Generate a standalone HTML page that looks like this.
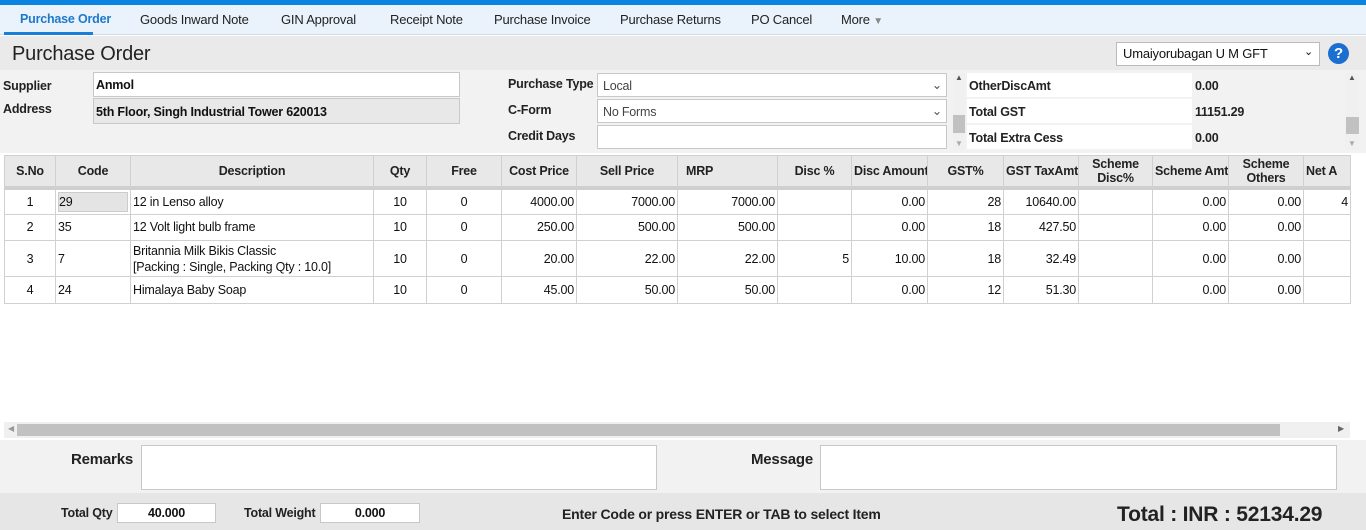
<!DOCTYPE html>
<html><head><meta charset="utf-8"><style>
*{box-sizing:border-box;margin:0;padding:0}
body{width:1366px;height:530px;overflow:hidden;background:#fff;font-family:"Liberation Sans",sans-serif;font-size:12.5px;color:#111;position:relative;letter-spacing:-0.2px}
.a{position:absolute}
.tab{position:absolute;top:12px;font-size:13px;color:#222}
.lbl{position:absolute;font-weight:bold;font-size:12.5px;color:#222}
.inp{position:absolute;background:#fff;border:1px solid #c8c8c8}
table{position:absolute;left:4px;top:155px;border-collapse:collapse;table-layout:fixed;width:1346px}
td,th{border:1px solid #d0d0d0;font-size:12.5px;white-space:nowrap;overflow:hidden;padding:0 2px}
th{background:#e8e8e8;height:32px;font-weight:bold;color:#222;line-height:14px;border-bottom:4px solid #cfcfcf}
td{height:26.5px;text-align:right}
td.c{text-align:center}td.l{text-align:left}
</style></head><body>
<div class="a" style="left:0;top:0;width:1366px;height:5px;background:#0a84e0"></div>
<div class="a" style="left:0;top:5px;width:1366px;height:30px;background:#eaf3fb;border-bottom:1px solid #cfdbe6"></div>
<div class="a" style="left:4px;top:32px;width:89px;height:3px;background:#1a7fd6"></div>
<div class="tab" style="left:20px;color:#1e78cc;font-weight:bold;font-size:12.5px">Purchase Order</div>
<div class="tab" style="left:140px">Goods Inward Note</div>
<div class="tab" style="left:281px">GIN Approval</div>
<div class="tab" style="left:390px">Receipt Note</div>
<div class="tab" style="left:494px">Purchase Invoice</div>
<div class="tab" style="left:620px">Purchase Returns</div>
<div class="tab" style="left:751px">PO Cancel</div>
<div class="tab" style="left:841px">More <span style="color:#888;font-size:10px">▼</span></div>
<div class="a" style="left:0;top:36px;width:1366px;height:34px;background:#eaeaea"></div>
<div class="a" style="left:12px;top:43px;font-size:20px;color:#222">Purchase Order</div>
<div class="a" style="left:1116px;top:42px;width:204px;height:24px;background:#fff;border:1px solid #bbb;font-size:13px;padding:3px 6px">Umaiyorubagan U M GFT<span style="position:absolute;right:6px;top:2px;font-size:11px">⌄</span></div>
<div class="a" style="left:1328px;top:43px;width:21px;height:21px;border-radius:50%;background:#1a6fd0;color:#fff;font-weight:bold;text-align:center;font-size:15px;line-height:21px">?</div>
<div class="a" style="left:0;top:70px;width:1366px;height:83px;background:#f2f2f2"></div>
<div class="lbl" style="left:3px;top:79px">Supplier</div>
<div class="lbl" style="left:3px;top:102px">Address</div>
<div class="inp" style="left:93px;top:72px;width:367px;height:25px;padding:5px 2px;font-weight:bold">Anmol</div>
<div class="inp" style="left:93px;top:98px;width:367px;height:26px;padding:6px 2px;font-weight:bold;background:#e8e8e8">5th Floor, Singh Industrial Tower 620013</div>
<div class="lbl" style="left:508px;top:77px">Purchase Type</div>
<div class="lbl" style="left:508px;top:103px">C-Form</div>
<div class="lbl" style="left:508px;top:129px">Credit Days</div>
<div class="inp" style="left:597px;top:73px;width:350px;height:24px;padding:5px 5px;color:#444">Local<span style="position:absolute;right:4px;top:3px;color:#555">⌄</span></div>
<div class="inp" style="left:597px;top:99px;width:350px;height:24px;padding:5px 5px;color:#444">No Forms<span style="position:absolute;right:4px;top:3px;color:#555">⌄</span></div>
<div class="inp" style="left:597px;top:125px;width:350px;height:24px"></div>
<div class="a" style="left:953px;top:73px;width:12px;height:77px;background:#f0f0f0"><div class="a" style="left:0;top:42px;width:12px;height:18px;background:#c1c1c1"></div><div class="a" style="left:2px;top:0;font-size:8px;color:#555">▲</div><div class="a" style="left:2px;top:66px;font-size:8px;color:#aaa">▼</div></div>
<div class="a" style="left:967px;top:73px;width:225px;height:24px;background:#fff"></div>
<div class="a" style="left:967px;top:99px;width:225px;height:24px;background:#fff"></div>
<div class="a" style="left:967px;top:125px;width:225px;height:24px;background:#fff"></div>
<div class="lbl" style="left:969px;top:79px">OtherDiscAmt</div>
<div class="lbl" style="left:969px;top:105px">Total GST</div>
<div class="lbl" style="left:969px;top:131px">Total Extra Cess</div>
<div class="lbl" style="left:1195px;top:79px">0.00</div>
<div class="lbl" style="left:1195px;top:105px">11151.29</div>
<div class="lbl" style="left:1195px;top:131px">0.00</div>
<div class="a" style="left:1345px;top:73px;width:14px;height:77px;background:#f0f0f0"><div class="a" style="left:1px;top:44px;width:13px;height:17px;background:#c1c1c1"></div><div class="a" style="left:3px;top:0;font-size:8px;color:#555">▲</div><div class="a" style="left:3px;top:66px;font-size:8px;color:#aaa">▼</div></div>
<table>
<colgroup><col style="width:51px"><col style="width:75px"><col style="width:243px"><col style="width:53px"><col style="width:75px"><col style="width:75px"><col style="width:101px"><col style="width:100px"><col style="width:74px"><col style="width:76px"><col style="width:76px"><col style="width:75px"><col style="width:74px"><col style="width:76px"><col style="width:75px"><col style="width:47px"></colgroup>
<tr><th>S.No</th><th>Code</th><th>Description</th><th>Qty</th><th>Free</th><th>Cost Price</th><th>Sell Price</th><th style="text-align:left;padding-left:8px">MRP</th><th>Disc %</th><th>Disc Amount</th><th>GST%</th><th>GST TaxAmt</th><th>Scheme<br>Disc%</th><th>Scheme Amt</th><th>Scheme<br>Others</th><th style="text-align:left">Net A</th></tr>
<tr><td class="c">1</td><td class="l"><span style="display:block;background:#e4e4e4;border:1px solid #ccc;height:20px;line-height:18px;width:70px">29</span></td><td class="l">12 in Lenso alloy</td><td class="c">10</td><td class="c">0</td><td>4000.00</td><td>7000.00</td><td>7000.00</td><td></td><td>0.00</td><td>28</td><td>10640.00</td><td></td><td>0.00</td><td>0.00</td><td>4</td></tr>
<tr><td class="c">2</td><td class="l">35</td><td class="l">12 Volt light bulb frame</td><td class="c">10</td><td class="c">0</td><td>250.00</td><td>500.00</td><td>500.00</td><td></td><td>0.00</td><td>18</td><td>427.50</td><td></td><td>0.00</td><td>0.00</td><td></td></tr>
<tr><td class="c" style="height:36px">3</td><td class="l">7</td><td class="l" style="line-height:16px">Britannia Milk Bikis Classic<br>[Packing : Single, Packing Qty : 10.0]</td><td class="c">10</td><td class="c">0</td><td>20.00</td><td>22.00</td><td>22.00</td><td>5</td><td>10.00</td><td>18</td><td>32.49</td><td></td><td>0.00</td><td>0.00</td><td></td></tr>
<tr><td class="c">4</td><td class="l">24</td><td class="l">Himalaya Baby Soap</td><td class="c">10</td><td class="c">0</td><td>45.00</td><td>50.00</td><td>50.00</td><td></td><td>0.00</td><td>12</td><td>51.30</td><td></td><td>0.00</td><td>0.00</td><td></td></tr>
</table>
<div class="a" style="left:4px;top:422px;width:1346px;height:16px;background:#f0f0f0"><div class="a" style="left:13px;top:2px;width:1263px;height:12px;background:#c1c1c1"></div><div class="a" style="left:4px;top:2px;font-size:8px;color:#999">◀</div><div class="a" style="left:1334px;top:2px;font-size:8px;color:#666">▶</div></div>
<div class="a" style="left:0;top:440px;width:1366px;height:53px;background:#f2f2f2"></div>
<div class="a" style="left:71px;top:451px;font-size:15px;font-weight:bold;color:#222">Remarks</div>
<div class="inp" style="left:141px;top:445px;width:516px;height:45px"></div>
<div class="a" style="left:751px;top:451px;font-size:15px;font-weight:bold;color:#222">Message</div>
<div class="inp" style="left:820px;top:445px;width:517px;height:45px"></div>
<div class="a" style="left:0;top:493px;width:1366px;height:37px;background:#e6e6e6"></div>
<div class="a" style="left:61px;top:506px;font-size:12.5px;font-weight:bold;color:#222">Total Qty</div>
<div class="inp" style="left:117px;top:503px;width:99px;height:20px;text-align:center;line-height:18px;font-weight:bold">40.000</div>
<div class="a" style="left:244px;top:506px;font-size:12.5px;font-weight:bold;color:#222">Total Weight</div>
<div class="inp" style="left:320px;top:503px;width:100px;height:20px;text-align:center;line-height:18px;font-weight:bold">0.000</div>
<div class="a" style="left:562px;top:506px;font-size:14px;font-weight:bold;color:#222">Enter Code or press ENTER or TAB to select Item</div>
<div class="a" style="left:1117px;top:503px;font-size:21px;font-weight:bold;color:#222">Total : INR : 52134.29</div>
</body></html>
